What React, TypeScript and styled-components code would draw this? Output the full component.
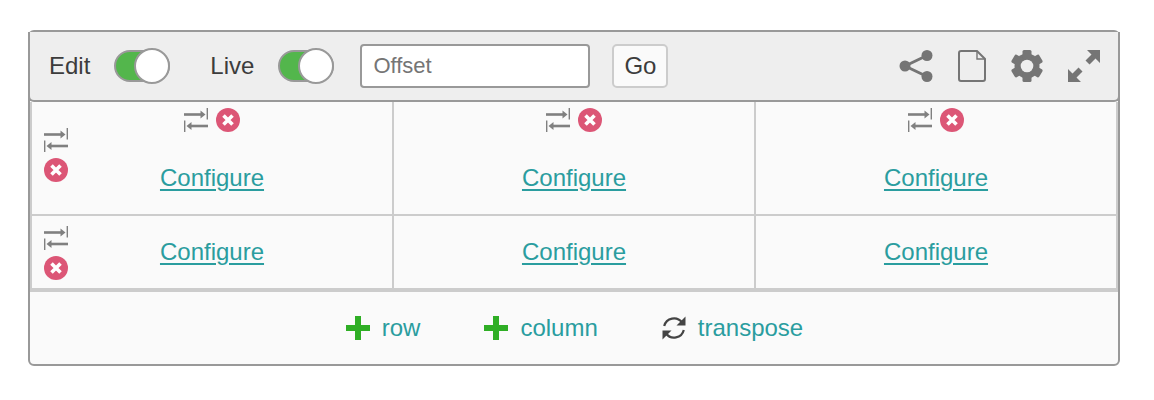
import React from "react";
import styled, { createGlobalStyle } from "styled-components";

const GlobalStyle = createGlobalStyle`
    html, body {
        margin: 0;
        padding: 0;
        background: #fff;
    }
    body {
        font-family: "Liberation Sans", Arial, sans-serif;
        color: #3c3c3c;
    }
`;

const Page = styled.div`
    padding: 30px 34px 34px 28px;
`;

const Panel = styled.div`
    width: 1092px;
    height: 336px;
    box-sizing: border-box;
    border: 2px solid #999;
    border-radius: 6px;
    background: #fafafa;
    display: flex;
    flex-direction: column;
`;

const Toolbar = styled.div`
    height: 70px;
    box-sizing: border-box;
    margin: 0 -2px;
    padding: 0 18px 0 19px;
    border: solid #999;
    border-width: 0 2px 2px;
    border-radius: 0 0 6px 6px;
    background: #eee;
    display: flex;
    align-items: center;
`;

const Label = styled.span`
    font-size: 24px;
    line-height: 28px;
    margin-right: 24px;
`;

const Track = styled.span`
    width: 56px;
    height: 32px;
    box-sizing: border-box;
    border: 2px solid #999;
    border-radius: 16px;
    background: linear-gradient(to right, #53b64c 60%, #fff 60%);
    position: relative;
    margin-right: ${(p: { $gap: number }) => p.$gap}px;
`;

const Knob = styled.span`
    position: absolute;
    top: -4px;
    right: -2px;
    width: 36px;
    height: 36px;
    box-sizing: border-box;
    border: 2px solid #999;
    border-radius: 50%;
    background: #fff;
`;

const OffsetInput = styled.input`
    width: 230px;
    height: 44px;
    box-sizing: border-box;
    padding: 0 11px;
    border: 2px solid #999;
    border-radius: 4px;
    background: #fff;
    font: 22px "Liberation Sans", Arial, sans-serif;
    outline: none;
    &::placeholder {
        color: #757575;
        opacity: 1;
    }
`;

const GoButton = styled.button`
    width: 56px;
    height: 44px;
    margin-left: 22px;
    padding: 0;
    border: 2px solid #ccc;
    border-radius: 5px;
    background: #fafafa;
    color: #3c3c3c;
    font: 24px "Liberation Sans", Arial, sans-serif;
`;

const ToolIcons = styled.div`
    margin-left: auto;
    display: flex;
    align-items: center;
    gap: 25px;
    color: #757575;
`;

const Table = styled.div`
    border: solid #ccc;
    border-width: 0 2px 4px;
`;

const Row = styled.div`
    display: grid;
    grid-template-columns: 360px 360px 360px;
    column-gap: 2px;
    background: #ccc;
    & + & {
        border-top: 2px solid #ccc;
    }
`;

const Cell = styled.div`
    position: relative;
    background: #fafafa;
`;

const ColumnControls = styled.div`
    height: 40px;
    box-sizing: border-box;
    padding-top: 6px;
    display: flex;
    justify-content: center;
    gap: 8px;
`;

const RowControls = styled.div<{ $top: number }>`
    position: absolute;
    left: 12px;
    top: ${(p) => p.$top}px;
    display: flex;
    flex-direction: column;
    gap: 6px;
`;

const CellBody = styled.div`
    height: 72px;
    display: flex;
    align-items: center;
    justify-content: center;
`;

const ConfigureLink = styled.a`
    font-size: 24px;
    line-height: 28px;
    color: #2a9d9f;
    text-decoration: underline;
    text-decoration-thickness: 2px;
    text-underline-offset: 3px;
`;

const Footer = styled.div`
    flex: 1;
    display: flex;
    align-items: center;
    justify-content: center;
    gap: 64px;
    padding-left: 1px;
`;

const FooterAction = styled.span`
    display: flex;
    align-items: center;
    gap: 12px;
    font-size: 24px;
    line-height: 28px;
    color: #2a9d9f;
`;

const Icon = styled.svg`
    display: block;
    flex: none;
`;

const SwapIcon = () => (
    <Icon width="24" height="24" viewBox="0 0 24 24" fill="#808080">
        <rect x="0" y="5.2" width="19" height="2.6" />
        <path d="M16.5 2.5 L21.5 6.5 L16.5 10.5 Z" />
        <rect x="22.6" y="0" width="1.4" height="11.5" />
        <rect x="5" y="16.7" width="19" height="2.6" />
        <path d="M7.5 14 L2.5 18 L7.5 22 Z" />
        <rect x="0" y="12.5" width="1.4" height="11.5" />
    </Icon>
);

const RemoveIcon = () => (
    <Icon width="24" height="24" viewBox="0 0 24 24">
        <circle cx="12" cy="12" r="12" fill="#dc5676" />
        <path d="M7.5 7.5 L16.5 16.5 M16.5 7.5 L7.5 16.5" stroke="#fff" strokeWidth="3.6" />
    </Icon>
);

const PlusIcon = () => (
    <Icon width="24" height="24" viewBox="0 0 24 24" fill="#2fae25">
        <path d="M9 0 H15 V9 H24 V15 H15 V24 H9 V15 H0 V9 H9 Z" />
    </Icon>
);

const TransposeIcon = () => (
    <Icon width="24" height="24" viewBox="0 0 24 24" fill="none">
        <path d="M2.2 10 A10 10 0 0 1 20 6.5" stroke="#444" strokeWidth="2.2" />
        <path d="M23.5 0.5 V9.5 H14.5 Z" fill="#444" />
        <path d="M21.8 14 A10 10 0 0 1 4 17.5" stroke="#444" strokeWidth="2.2" />
        <path d="M0.5 23.5 V14.5 H9.5 Z" fill="#444" />
    </Icon>
);

const ShareIcon = () => (
    <Icon width="34" height="32" viewBox="0 0 34 32" fill="#757575">
        <circle cx="28" cy="5.5" r="5.5" />
        <circle cx="28" cy="26.5" r="5.5" />
        <circle cx="6" cy="16" r="5.5" />
        <path d="M6 16 L28 5.5 M6 16 L28 26.5" stroke="#757575" strokeWidth="3" />
    </Icon>
);

const PageIcon = () => (
    <Icon width="28" height="32" viewBox="0 0 28 32" fill="none" stroke="#757575" strokeWidth="2">
        <path d="M2.5 1 H19 L27 9 V29 A2 2 0 0 1 25 31 H3 A2 2 0 0 1 1 29 V3 A2 2 0 0 1 3 1 Z" />
        <path d="M19 1 V9 H27" strokeWidth="1.4" />
    </Icon>
);

const GearIcon = () => (
    <Icon width="32" height="32" viewBox="0 0 32 32" fill="#757575">
        <circle cx="16" cy="16" r="12.5" />
        <rect x="11.5" y="0" width="9" height="32" rx="1.5" />
        <rect x="11.5" y="0" width="9" height="32" rx="1.5" transform="rotate(60 16 16)" />
        <rect x="11.5" y="0" width="9" height="32" rx="1.5" transform="rotate(120 16 16)" />
        <circle cx="16" cy="16" r="6.3" fill="#eee" />
    </Icon>
);

const ExpandIcon = () => (
    <Icon width="32" height="32" viewBox="0 0 32 32" fill="#757575">
        <path d="M19 0 H32 V13 L27.5 8.5 L21.5 14.5 L17.5 10.5 L23.5 4.5 Z" />
        <path d="M13 32 H0 V19 L4.5 23.5 L10.5 17.5 L14.5 21.5 L8.5 27.5 Z" />
    </Icon>
);

const Toggle = ({ gap }: { gap: number }) => (
    <Track $gap={gap}>
        <Knob />
    </Track>
);

const rows = [
    { controlsTop: 26, withHeaders: true },
    { controlsTop: 10, withHeaders: false },
];

export default function App() {
    return (
        <>
            <GlobalStyle />
            <Page>
                <Panel>
                    <Toolbar>
                        <Label>Edit</Label>
                        <Toggle gap={40} />
                        <Label>Live</Label>
                        <Toggle gap={26} />
                        <OffsetInput placeholder="Offset" readOnly />
                        <GoButton>Go</GoButton>
                        <ToolIcons>
                            <ShareIcon />
                            <PageIcon />
                            <GearIcon />
                            <ExpandIcon />
                        </ToolIcons>
                    </Toolbar>
                    <Table>
                        {rows.map((row, r) => (
                            <Row key={r}>
                                {[0, 1, 2].map((c) => (
                                    <Cell key={c}>
                                        {row.withHeaders && (
                                            <ColumnControls>
                                                <SwapIcon />
                                                <RemoveIcon />
                                            </ColumnControls>
                                        )}
                                        {c === 0 && (
                                            <RowControls $top={row.controlsTop}>
                                                <SwapIcon />
                                                <RemoveIcon />
                                            </RowControls>
                                        )}
                                        <CellBody>
                                            <ConfigureLink href="#">Configure</ConfigureLink>
                                        </CellBody>
                                    </Cell>
                                ))}
                            </Row>
                        ))}
                    </Table>
                    <Footer>
                        <FooterAction>
                            <PlusIcon />
                            row
                        </FooterAction>
                        <FooterAction>
                            <PlusIcon />
                            column
                        </FooterAction>
                        <FooterAction>
                            <TransposeIcon />
                            transpose
                        </FooterAction>
                    </Footer>
                </Panel>
            </Page>
        </>
    );
}
